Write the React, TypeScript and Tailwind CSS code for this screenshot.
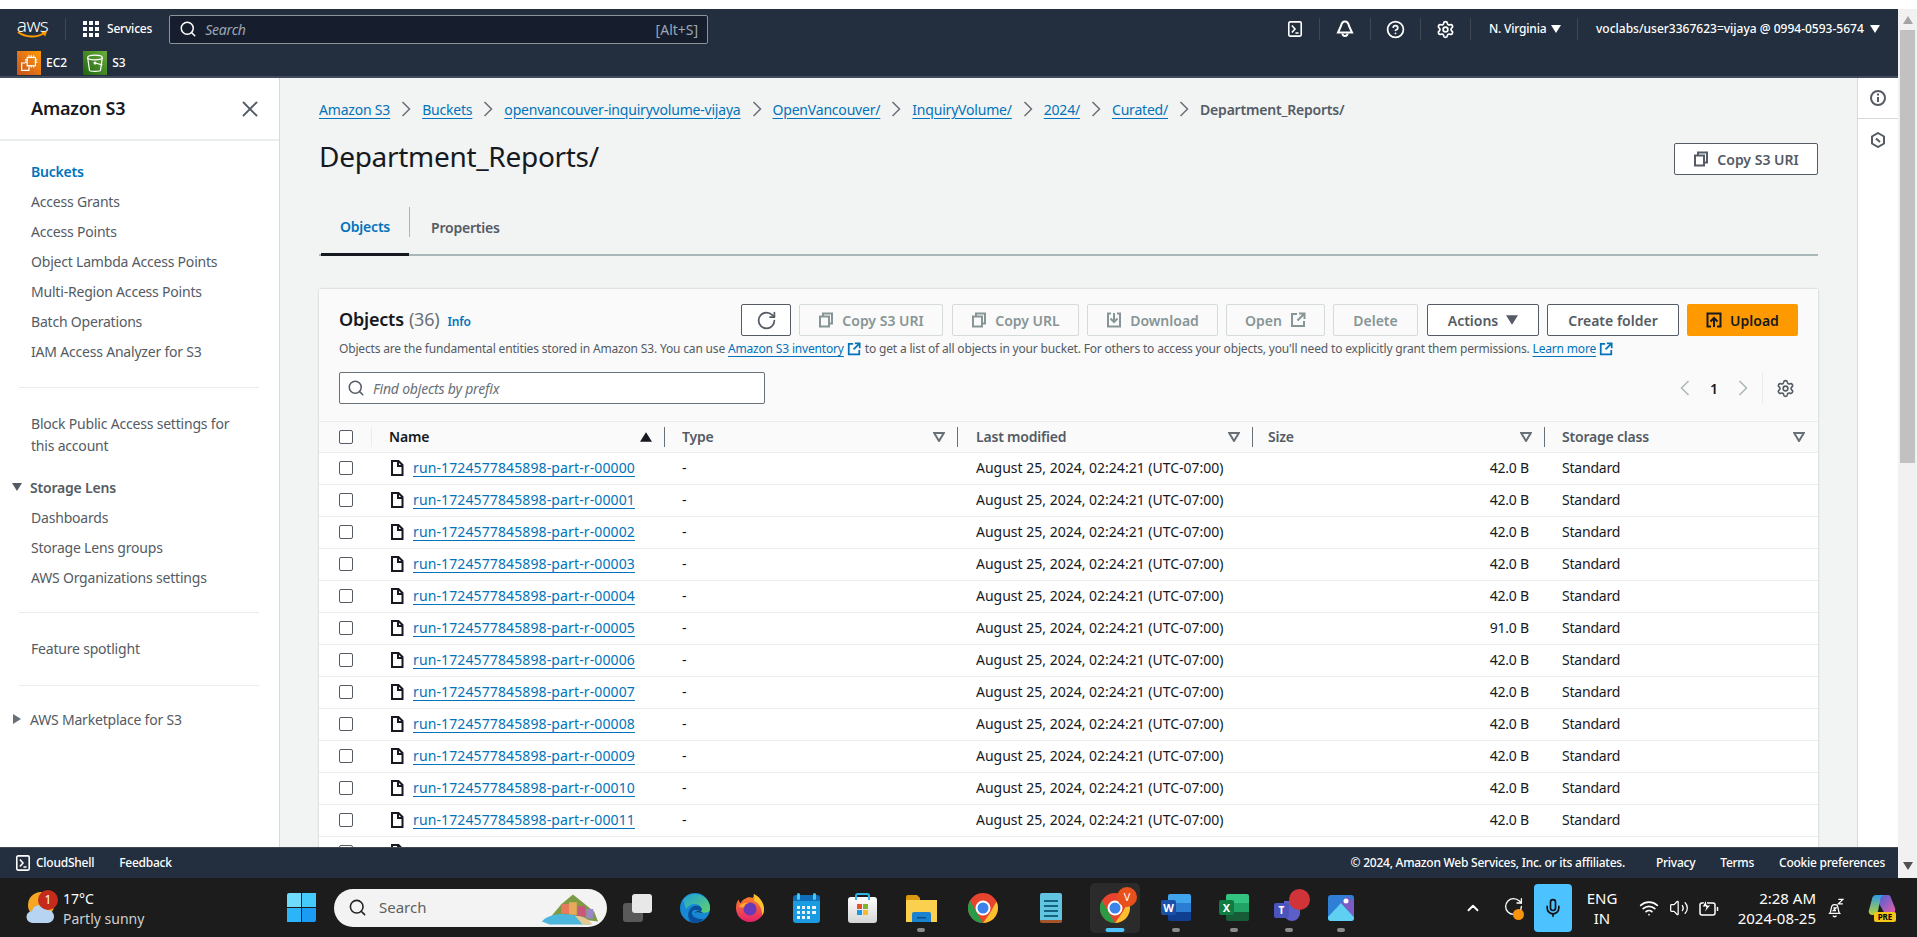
import React from 'react';
import { Search, X, RotateCw, Settings, CircleHelp, ChevronUp, Wifi, Volume2, Mic } from 'lucide-react';

const sans = 'font-["Noto_Sans",sans-serif]';

function Caret({ className = '' }: { className?: string }) {
  return (
    <svg viewBox="0 0 10 8" className={`w-[10px] h-[8px] ${className}`}>
      <path d="M0 0h10L5 8z" fill="currentColor" />
    </svg>
  );
}

function FilterCaret() {
  return (
    <svg viewBox="0 0 12 10" className="w-[12px] h-[10px] text-[#687078]">
      <path d="M1.2 1h9.6L6 9z" fill="none" stroke="currentColor" strokeWidth="2" />
    </svg>
  );
}

function Chevron({ left, className = '' }: { left?: boolean; className?: string }) {
  return (
    <svg viewBox="0 0 10 16" className={`w-[10px] h-[16px] shrink-0 ${className}`} fill="none" stroke="currentColor" strokeWidth="1.500">
      <path d={left ? 'M8.500 1L1.500 8l7 7' : 'M1.500 1l7 7-7 7'} />
    </svg>
  );
}

function CopyIcon() {
  return (
    <svg viewBox="0 0 16 16" className="w-[16px] h-[16px]" fill="none" stroke="currentColor" strokeWidth="2">
      <path d="M5 4V1.500h9v10h-3" />
      <path d="M2 4.500h9v10H2z" />
    </svg>
  );
}

function DownloadIcon() {
  return (
    <svg viewBox="0 0 16 16" className="w-[16px] h-[16px]" fill="none" stroke="currentColor" strokeWidth="2">
      <path d="M5 1.500H2v13h12v-13h-3" />
      <path d="M8 1v8M4.500 6.500L8 10l3.500-3.500" />
    </svg>
  );
}

function ExternalIcon({ className = '' }: { className?: string }) {
  return (
    <svg viewBox="0 0 16 16" className={`w-[14px] h-[14px] ${className}`} fill="none" stroke="currentColor" strokeWidth="2">
      <path d="M7 2H2v12h12V9" />
      <path d="M9 1.500h5.500V7M14 2L7.500 8.500" />
    </svg>
  );
}

function UploadIcon() {
  return (
    <svg viewBox="0 0 16 16" className="w-[16px] h-[16px] text-[#16191f]" fill="none" stroke="currentColor" strokeWidth="2">
      <path d="M5 14.500H1.500v-13h13v13H11" />
      <path d="M8 15V6.500M4.500 9.500L8 6l3.500 3.500" />
    </svg>
  );
}

function FileIcon() {
  return (
    <svg viewBox="0 0 14 16" className="w-[14px] h-[16px] shrink-0 text-[#16191f]" fill="none" stroke="currentColor" strokeWidth="2">
      <path d="M2 1h6.500L12.500 5v10H2z" />
      <path d="M8 1v5h5" />
    </svg>
  );
}

function TerminalBox({ size = 'w-[16px] h-[16px]' }: { size?: string }) {
  return (
    <svg viewBox="0 0 16 18" className={size} fill="none" stroke="white" strokeWidth="1.800">
      <rect x="1" y="1" width="14" height="16" rx="1.500" />
      <path d="M4.500 5l3.500 4-3.500 4M8.500 13.500H12" />
    </svg>
  );
}

function NavBell() {
  return (
    <svg viewBox="0 0 18 18" className="w-[18px] h-[18px]" fill="none" stroke="white" strokeWidth="2">
      <path d="M9 1.500c2.500 0 3.500 2 4 4.500l3 6.500H2L5 6c.5-2.500 1.500-4.500 4-4.500z" />
      <path d="M6.500 13.500a2.500 2.500 0 0 0 5 0" />
    </svg>
  );
}

function AppsGrid() {
  return (
    <div className="grid grid-cols-3 gap-[2.500px] w-[16px] h-[16px]">
      {Array.from({ length: 9 }).map((_, i) => (
        <span key={i} className="bg-white w-[3.500px] h-[3.500px]" />
      ))}
    </div>
  );
}

function Ec2Icon() {
  return (
    <div className="w-[24px] h-[24px] bg-gradient-to-tr from-[#c8511b] to-[#ff9900] flex items-center justify-center">
      <svg viewBox="0 0 24 24" className="w-[22px] h-[22px]" fill="none" stroke="white" strokeWidth="1.300">
        <rect x="10" y="6" width="9" height="9" />
        <path d="M12 3.500V6M14.500 3.500V6M17 3.500V6M12 15v2M14.500 15v2M17 15v2M7.500 8.500H10M7.500 11H10M19 8.500h2M19 11h2" />
        <path d="M8 12H4v8h8v-3" />
      </svg>
    </div>
  );
}

function S3Icon() {
  return (
    <div className="w-[24px] h-[24px] bg-gradient-to-tr from-[#1b660f] to-[#6cae3e] flex items-center justify-center">
      <svg viewBox="0 0 24 24" className="w-[22px] h-[22px]" fill="none" stroke="white" strokeWidth="1.300">
        <ellipse cx="12" cy="6" rx="8" ry="2.500" />
        <path d="M4 6l2 14c0 1.500 12 1.500 12 0l2-14" />
        <circle cx="12" cy="12" r="1" />
        <path d="M12 12l8 2" />
      </svg>
    </div>
  );
}

function NavSep({ className = '' }: { className?: string }) {
  return <span className={`w-px h-[22px] bg-[#414750] ${className}`} />;
}

function TopNav() {
  return (
    <header className="h-[69px] shrink-0 bg-[#232f3e] border-b-2 border-b-[#414d5c] text-white">
      <div className="h-[40px] flex items-center">
        <div className="ml-[17px] w-[31px] flex flex-col items-center">
          <span className={`${sans} text-[19px] font-light leading-[14px] -mt-[2px] tracking-[-0.6px]`}>aws</span>
          <svg viewBox="0 0 32 8" className="w-[31px] h-[8px] -mt-[1px]">
            <path d="M1 1c8 6 20 6 27 1" fill="none" stroke="#ff9900" strokeWidth="2" />
            <path d="M25 1l6-.500-2 5z" fill="#ff9900" />
          </svg>
        </div>
        <NavSep className="ml-[17px]" />
        <div className="ml-[17px]">
          <AppsGrid />
        </div>
        <span className={`${sans} ml-[8px] text-[12px] font-medium tracking-[-0.2px]`}>Services</span>
        <div className="ml-[17px] w-[539px] h-[29px] bg-[#161e2d] border border-[#879596] rounded-[2px] flex items-center pl-[9px] pr-[9px]">
          <Search className="w-[18px] h-[18px] text-white" strokeWidth={2} />
          <span className={`${sans} ml-[8px] text-[14px] italic text-[#9ba7b6] tracking-[-0.2px]`}>Search</span>
          <span className={`${sans} ml-auto text-[14px] text-[#9ba7b6]`}>[Alt+S]</span>
        </div>
        <div className="ml-auto flex items-center">
          <div className="w-[48px] flex justify-center"><TerminalBox /></div>
          <NavSep />
          <div className="w-[50px] flex justify-center"><NavBell /></div>
          <NavSep />
          <div className="w-[49px] flex justify-center"><CircleHelp className="w-[19px] h-[19px]" strokeWidth={2.200} /></div>
          <NavSep />
          <div className="w-[49px] flex justify-center"><Settings className="w-[19px] h-[19px]" strokeWidth={2.200} /></div>
          <NavSep />
          <div className={`${sans} w-[106px] pl-[18px] flex items-center gap-[5px] text-[12px] font-medium tracking-[-0.2px]`}>
            N. Virginia <Caret />
          </div>
          <NavSep />
          <div className={`${sans} w-[320px] pl-[18px] flex items-center gap-[6px] text-[12px] font-medium whitespace-nowrap`}>
            voclabs/user3367623=vijaya @ 0994-0593-5674 <Caret />
          </div>
        </div>
      </div>
      <div className="h-[24px] mt-[2px] flex items-center pl-[17px]">
        <Ec2Icon />
        <span className={`${sans} ml-[5px] text-[12px] font-medium`}>EC2</span>
        <div className="ml-[16px]"><S3Icon /></div>
        <span className={`${sans} ml-[5px] text-[12px] font-medium`}>S3</span>
      </div>
    </header>
  );
}

const navItems = ['Access Grants', 'Access Points', 'Object Lambda Access Points', 'Multi-Region Access Points', 'Batch Operations', 'IAM Access Analyzer for S3'];

function SideLink({ children }: { children: React.ReactNode }) {
  return <div className="h-[30px] leading-[30px] pl-[31px] whitespace-nowrap">{children}</div>;
}

function SideRule() {
  return <div className="h-px bg-[#eaeded] mx-[19px] w-[240px]" />;
}

function Sidebar() {
  return (
    <aside className={`${sans} w-[280px] shrink-0 bg-white border-r border-r-[#d5dbdb] text-[14px] text-[#545b64] tracking-[-0.2px]`}>
      <div className="h-[63px] border-b-2 border-b-[#eaeded] flex items-center justify-between pl-[31px] pr-[16px]">
        <span className="text-[18px] font-semibold text-[#16191f]">Amazon S3</span>
        <X className="w-[26px] h-[26px] text-[#545b64]" strokeWidth={1.700} />
      </div>
      <div className="pt-[16px]">
        <SideLink><span className="font-semibold text-[#0073bb]">Buckets</span></SideLink>
        {navItems.map((t) => (
          <SideLink key={t}>{t}</SideLink>
        ))}
      </div>
      <div className="mt-[20px]"><SideRule /></div>
      <div className="pt-[25px] pl-[31px] leading-[22px]">
        Block Public Access settings for<br />this account
      </div>
      <div className="mt-[14px] h-[32px] flex items-center pl-[12px] font-semibold gap-[8px]">
        <Caret className="text-[#545b64]" />
        Storage Lens
      </div>
      <SideLink>Dashboards</SideLink>
      <SideLink>Storage Lens groups</SideLink>
      <SideLink>AWS Organizations settings</SideLink>
      <div className="mt-[19px]"><SideRule /></div>
      <div className="h-[72px] leading-[72px] pl-[31px]">Feature spotlight</div>
      <SideRule />
      <div className="mt-[18px] h-[30px] flex items-center pl-[13px] gap-[9px]">
        <svg viewBox="0 0 8 10" className="w-[8px] h-[10px] text-[#687078]"><path d="M0 0l8 5-8 5z" fill="currentColor" /></svg>
        AWS Marketplace for S3
      </div>
    </aside>
  );
}

const crumbs = ['Amazon S3', 'Buckets', 'openvancouver-inquiryvolume-vijaya', 'OpenVancouver/', 'InquiryVolume/', '2024/', 'Curated/'];

function Breadcrumbs() {
  return (
    <div className="h-[20px] flex items-center text-[14px]">
      {crumbs.map((c) => (
        <React.Fragment key={c}>
          <span className="text-[#0073bb] underline underline-offset-[3px] whitespace-nowrap">{c}</span>
          <Chevron className="mx-[11px] text-[#687078]" />
        </React.Fragment>
      ))}
      <span className="font-semibold text-[#545b64]">Department_Reports/</span>
    </div>
  );
}

function Btn({ children, disabled, className = '' }: { children: React.ReactNode; disabled?: boolean; className?: string }) {
  return (
    <div
      className={`h-[32px] flex items-center justify-center gap-[8px] rounded-[2px] border text-[14px] font-semibold tracking-normal whitespace-nowrap ${
        disabled ? 'border-[#d5dbdb] bg-[#fafafa] text-[#879596]' : 'border-[#545b64] bg-white text-[#545b64]'
      } ${className}`}
    >
      {children}
    </div>
  );
}

function Toolbar() {
  return (
    <div className="flex items-center">
      <Btn className="w-[50px]"><RotateCw className="w-[21px] h-[21px]" strokeWidth={2} /></Btn>
      <Btn disabled className="w-[144px] ml-[8px]"><CopyIcon />Copy S3 URI</Btn>
      <Btn disabled className="w-[127px] ml-[9px]"><CopyIcon />Copy URL</Btn>
      <Btn disabled className="w-[131px] ml-[8px]"><DownloadIcon />Download</Btn>
      <Btn disabled className="w-[99px] ml-[8px]">Open<ExternalIcon className="w-[16px] h-[16px]" /></Btn>
      <Btn disabled className="w-[85px] ml-[8px]">Delete</Btn>
      <Btn className="w-[112px] ml-[9px]">Actions<Caret className="w-[12px] h-[10px]" /></Btn>
      <Btn className="w-[132px] ml-[8px]">Create folder</Btn>
      <div className="w-[111px] h-[32px] ml-[8px] bg-[#ff9900] rounded-[2px] flex items-center justify-center gap-[8px] text-[14px] font-semibold tracking-normal text-[#16191f]">
        <UploadIcon />Upload
      </div>
    </div>
  );
}

const rows = Array.from({ length: 12 }).map((_, i) => ({
  name: `run-1724577845898-part-r-${String(i).padStart(5, '0')}`,
  size: i === 5 ? '91.0 B' : '42.0 B',
}));

const gridCols = 'grid grid-cols-[53px_293px_293px_295px_292px_272px]';

function Check() {
  return <span className="block w-[14px] h-[14px] bg-white border border-[#545b64] rounded-[2px]" />;
}

function HeadCell({ label, sort, last, pl }: { label: string; sort?: boolean; last?: boolean; pl: string }) {
  return (
    <div className={`h-[20px] flex items-center justify-between pr-[12px] font-semibold text-[14px] text-[#545b64] ${pl} ${last ? '' : 'border-r border-r-[#687078]'}`}>
      <span className={`pb-[2px] ${sort ? 'text-[#16191f]' : ''}`}>{label}</span>
      {sort ? <Caret className="w-[12px] h-[10px] rotate-180 text-[#16191f]" /> : <FilterCaret />}
    </div>
  );
}

function ObjectsCard() {
  return (
    <section className="bg-white mt-[33px] shadow-[0_0_2px_rgba(0,28,36,0.3)] rounded-t-[2px]">
      <div className="bg-[#fafafa] h-[132px] pt-[15px] pl-[20px] pr-[20px]">
        <div className="flex items-center justify-between">
          <div className="flex items-baseline -mt-[2px]">
            <span className="text-[18px] font-semibold text-[#16191f]">Objects</span>
            <span className="text-[18px] text-[#687078] ml-[5px]">(36)</span>
            <span className="text-[12px] font-semibold text-[#0073bb] ml-[8px]">Info</span>
          </div>
          <Toolbar />
        </div>
        <p className="mt-[4px] h-[18px] leading-[18px] text-[12px] text-[#545b64] tracking-[-0.17px] whitespace-nowrap flex items-center">
          Objects are the fundamental entities stored in Amazon S3. You can use&nbsp;
          <span className="text-[#0073bb] underline underline-offset-[3px]">Amazon S3 inventory</span>
          <ExternalIcon className="ml-[3px] mr-[4px] text-[#0073bb]" />
          to get a list of all objects in your bucket. For others to access your objects, you'll need to explicitly grant them permissions.&nbsp;
          <span className="text-[#0073bb] underline underline-offset-[3px]">Learn more</span>
          <ExternalIcon className="ml-[3px] text-[#0073bb]" />
        </p>
        <div className="mt-[14px] flex items-center justify-between">
          <div className="w-[426px] h-[32px] bg-white border border-[#687078] rounded-[2px] flex items-center pl-[7px]">
            <Search className="w-[18px] h-[18px] text-[#545b64]" strokeWidth={2} />
            <span className="ml-[8px] text-[14px] italic text-[#687078]">Find objects by prefix</span>
          </div>
          <div className="flex items-center text-[#aab7b8] pr-[3px]">
            <Chevron left className="w-[8px] h-[14px]" />
            <span className="w-[48px] text-center text-[14px] font-semibold text-[#16191f]">1</span>
            <Chevron className="w-[8px] h-[14px]" />
            <span className="ml-[14px] w-px h-[32px] bg-[#eaeded]" />
            <Settings className="ml-[13px] w-[19px] h-[19px] text-[#545b64]" strokeWidth={2} />
          </div>
        </div>
      </div>
      <div className={`${gridCols} h-[32px] items-center bg-[#fafafa] border-y border-y-[#eaeded]`}>
        <div className="pl-[20px] h-[20px] flex items-center border-r border-r-[#eaeded]"><Check /></div>
        <HeadCell label="Name" sort pl="pl-[17px]" />
        <HeadCell label="Type" pl="pl-[17px]" />
        <HeadCell label="Last modified" pl="pl-[18px]" />
        <HeadCell label="Size" pl="pl-[15px]" />
        <HeadCell label="Storage class" last pl="pl-[17px]" />
      </div>
      {rows.map((r) => (
        <div key={r.name} className={`${gridCols} h-[32px] pb-[2px] items-center border-b border-b-[#eaeded] text-[14px] text-[#16191f]`}>
          <div className="pl-[20px]"><Check /></div>
          <div className="pl-[18px] flex items-center gap-[9px]">
            <FileIcon />
            <span className="text-[#0073bb] underline underline-offset-[3px] tracking-[0.12px] whitespace-nowrap">{r.name}</span>
          </div>
          <div className="pl-[17px]">-</div>
          <div className="pl-[18px] tracking-normal whitespace-nowrap">August 25, 2024, 02:24:21 (UTC-07:00)</div>
          <div className="pr-[16px] text-right">{r.size}</div>
          <div className="pl-[17px]">Standard</div>
        </div>
      ))}
      {/* next row, only its top edge shows above the console footer */}
      <div className={`${gridCols} h-[32px] pb-[2px] items-center`}>
        <div className="pl-[20px]"><Check /></div>
        <div className="pl-[18px]"><FileIcon /></div>
      </div>
    </section>
  );
}

function Content() {
  return (
    <main className={`${sans} flex-1 min-w-0 bg-[#f2f3f3] px-[39px] pt-[21px] overflow-hidden tracking-[-0.2px]`}>
      <Breadcrumbs />
      <div className="mt-[18px] flex items-start justify-between">
        <h1 className="text-[28px] leading-[40px] text-[#16191f] tracking-[-0.3px] -mt-[1px]">Department_Reports/</h1>
        <Btn className="w-[144px] mt-[6px]"><CopyIcon />Copy S3 URI</Btn>
      </div>
      <div className="mt-[31px] h-[49px] border-b-2 border-b-[#aab7b8] flex items-start text-[14px] font-semibold">
        <div className="w-[88px] h-[49px] ml-[2px] pb-[7px] border-b-[3px] border-b-[#16191f] flex items-center justify-center text-[#0073bb]">Objects</div>
        <span className="w-px h-[30px] bg-[#aab7b8]" />
        <div className="h-[40px] pl-[21px] flex items-center text-[#545b64]">Properties</div>
      </div>
      <ObjectsCard />
    </main>
  );
}

function RightRail() {
  return (
    <div className="w-[41px] shrink-0 bg-white border-l border-l-[#d5dbdb] text-[#545b64]">
      <div className="h-[41px] flex items-center justify-center border-b border-b-[#d5dbdb]">
        <svg viewBox="0 0 16 16" className="w-[16px] h-[16px]" fill="none" stroke="currentColor" strokeWidth="2">
          <circle cx="8" cy="8" r="7" />
          <path d="M8 7v5M8 3.500v2" />
        </svg>
      </div>
      <div className="h-[41px] flex items-center justify-center">
        <svg viewBox="0 0 16 16" className="w-[16px] h-[16px]" fill="none" stroke="currentColor" strokeWidth="2">
          <path d="M8 1l6 3.500v7L8 15l-6-3.500v-7z" />
          <path d="M6 6.500l4 3.500" />
        </svg>
      </div>
    </div>
  );
}

function ConsoleFooter() {
  return (
    <footer className={`${sans} h-[31px] shrink-0 bg-[#232f3e] border-t border-t-[#414750] flex items-center text-[12px] font-medium text-white tracking-[-0.25px]`}>
      <div className="ml-[15px]"><TerminalBox /></div>
      <span className="ml-[5px]">CloudShell</span>
      <span className="ml-[25px]">Feedback</span>
      <span className="ml-auto">© 2024, Amazon Web Services, Inc. or its affiliates.</span>
      <span className="ml-[31px]">Privacy</span>
      <span className="ml-[25px]">Terms</span>
      <span className="ml-[25px] mr-[13px]">Cookie preferences</span>
    </footer>
  );
}

function Scrollbar() {
  return (
    <div className="w-[19px] shrink-0 bg-[#f1f1f1] flex flex-col items-center">
      <div className="h-[21px] flex items-center justify-center text-[#a3a3a3]">
        <Caret className="rotate-180" />
      </div>
      <div className="w-[15px] h-[433px] bg-[#c1c1c1]" />
      <div className="mt-auto h-[24px] flex items-center justify-center text-[#505050]">
        <Caret />
      </div>
    </div>
  );
}

/* taskbar drawings */

function WeatherIcon() {
  return (
    <svg viewBox="0 0 28 34" className="w-[28px] h-[34px]">
      <circle cx="15" cy="14" r="13" fill="#f5a623" />
      <path d="M7 32a6 6 0 0 1-1-12 8 8 0 0 1 15-1 6 6 0 0 1 1 13z" fill="#b7d4f3" />
    </svg>
  );
}

function WindowsLogo() {
  return (
    <div className="grid grid-cols-2 gap-[1.500px] w-[29px] h-[29px]">
      <span className="bg-[#6fdcfb] rounded-tl-[2px]" />
      <span className="bg-[#45cbfa]" />
      <span className="bg-[#2bb4f8]" />
      <span className="bg-[#1a9cf6] rounded-br-[2px]" />
    </div>
  );
}

function BeachArt() {
  return (
    <svg viewBox="0 0 60 36" className="w-[58px] h-[36px]">
      <path d="M10 26l10-12 12-10 10 8 12 10 4 10z" fill="#7d9a45" />
      <rect x="20" y="14" width="8" height="10" fill="#e77b5c" />
      <rect x="28" y="12" width="8" height="13" fill="#e7a95c" />
      <rect x="37" y="16" width="8" height="11" fill="#c7577b" />
      <rect x="46" y="19" width="7" height="10" fill="#9a86c9" />
      <path d="M0 32c6-8 24-10 38-5l12 8H8z" fill="#4cb6dd" />
      <path d="M34 26c8 0 14 3 18 9H42z" fill="#e2c993" />
    </svg>
  );
}

function TaskView() {
  return (
    <div className="relative w-[29px] h-[28px]">
      <span className="absolute left-0 top-[9px] w-[20px] h-[19px] rounded-[3px] bg-[#5a5a5a]" />
      <span className="absolute left-[9px] top-0 w-[20px] h-[19px] rounded-[3px] bg-[#e8e8e8]" />
    </div>
  );
}

function EdgeIcon() {
  return (
    <svg viewBox="0 0 30 30" className="w-[30px] h-[30px]">
      <defs>
        <linearGradient id="edgeTop" x1="0" y1="0" x2="1" y2="1">
          <stop offset="0" stopColor="#1f9fdc" />
          <stop offset="1" stopColor="#5fd36a" />
        </linearGradient>
      </defs>
      <circle cx="15" cy="15" r="15" fill="#1688d6" />
      <path d="M3 7C8-1 24-2 29 10c2 5 1 8-1 9-2 1-5 1-7 0 1-4-1-8-6-8-4 0-7 2-9 5-1-3-2-6-3-9z" fill="url(#edgeTop)" />
      <path d="M21 19c-3-3-8-3-9 0-1 3 3 7 9 7 2 0 3 0 4-1-3 3-6 5-10 5-3 0-5-1-6-4-2-5 0-11 5-13 4-1 7 0 8 3z" fill="#0b4f9c" />
      <path d="M21 19c-2-1-5-1-6 1 3-2 5 0 8 0z" fill="#1c1c1c" />
    </svg>
  );
}

function FirefoxIcon() {
  return (
    <svg viewBox="0 0 30 30" className="w-[28px] h-[30px]">
      <defs>
        <linearGradient id="foxBody" x1="0" y1="0" x2="0" y2="1">
          <stop offset="0" stopColor="#ff8a1f" />
          <stop offset="1" stopColor="#e3206f" />
        </linearGradient>
      </defs>
      <path d="M15 30C6 30 0 23 0 15c0-4 1-7 3-9 0 2 1 3 2 4 1-3 4-5 7-6 2-1 4 0 6 0 1-1 1-2 1-4 6 3 11 9 11 17 0 7-7 13-15 13z" fill="url(#foxBody)" />
      <path d="M19 0c6 3 11 9 11 17 0 2-1 5-2 6 0-7-3-13-9-16 1-2 1-4 0-7z" fill="#fdc32e" />
      <circle cx="15" cy="16" r="7" fill="#6a39b8" />
      <path d="M3 13c4-4 8-4 11-3-3 0-5 2-5 4-2 1-4 0-6-1z" fill="#fca629" />
    </svg>
  );
}

function CalendarIcon() {
  return (
    <div className="relative w-[27px] h-[30px] pt-[2px]">
      <span className="absolute left-[4px] top-0 w-[3px] h-[7px] bg-[#4ac8f5] rounded-full" />
      <span className="absolute right-[4px] top-0 w-[3px] h-[7px] bg-[#4ac8f5] rounded-full" />
      <div className="h-full bg-[#1b9ce2] rounded-[3px] border-t-[6px] border-t-[#0d6fb8] grid grid-cols-4 gap-[2px] p-[4px] pt-[5px]">
        {Array.from({ length: 11 }).map((_, i) => (
          <span key={i} className="bg-white/90" />
        ))}
      </div>
    </div>
  );
}

function StoreIcon() {
  return (
    <div className="relative w-[29px] h-[30px] pt-[4px]">
      <span className="absolute left-[7px] top-0 w-[15px] h-[7px] border-2 border-[#2fb5e8] border-b-0 rounded-t-[3px]" />
      <div className="h-full bg-gradient-to-b from-white to-[#d5d5d5] rounded-[3px] flex items-center justify-center">
        <div className="grid grid-cols-2 gap-[1px] w-[11px] h-[11px]">
          <span className="bg-[#e5532c]" />
          <span className="bg-[#7db52c]" />
          <span className="bg-[#1a9ae0]" />
          <span className="bg-[#fcb92a]" />
        </div>
      </div>
    </div>
  );
}

function FolderIcon() {
  return (
    <svg viewBox="0 0 31 28" className="w-[31px] h-[28px]">
      <path d="M0 3a2 2 0 0 1 2-2h9l3 3v4H0z" fill="#d99a12" />
      <path d="M0 6h31v22H0z" fill="#fbd04e" />
      <rect x="6" y="18" width="19" height="12" rx="2" fill="#1b82cf" />
      <rect x="11" y="23" width="9" height="1.500" fill="#0a4d88" />
    </svg>
  );
}

function ChromeIcon({ size = 'w-[30px] h-[30px]' }: { size?: string }) {
  return (
    <svg viewBox="0 0 30 30" className={size}>
      <circle cx="15" cy="15" r="15" fill="#e8432e" />
      <path d="M15 30A15 15 0 0 1 2 7.500L9 20z" fill="#2b9a46" />
      <path d="M15 30l7-10 6.500-11.500A15 15 0 0 1 15 30z" fill="#fbc02d" />
      <circle cx="15" cy="15" r="7.500" fill="white" />
      <circle cx="15" cy="15" r="5.500" fill="#3b82ea" />
    </svg>
  );
}

function NotepadIcon() {
  return (
    <div className="w-[22px] h-[30px] rounded-[2px] bg-[#61c4e1] border-b-[3px] border-b-[#a8542a] flex flex-col gap-[3px] pt-[7px] px-[4px]">
      <span className="h-[2px] bg-[#14627f]" />
      <span className="h-[2px] bg-[#14627f]" />
      <span className="h-[2px] bg-[#14627f]" />
      <span className="h-[2px] bg-[#14627f]" />
    </div>
  );
}

function OfficeIcon({ letter, dark, colA, colB, colC }: { letter: string; dark: string; colA: string; colB: string; colC: string }) {
  return (
    <div className="relative w-[30px] h-[27px] pl-[7px]">
      <div className="h-full rounded-[2px] overflow-hidden flex flex-col">
        <span className={`flex-1 ${colA}`} />
        <span className={`flex-1 ${colB}`} />
        <span className={`flex-1 ${colC}`} />
      </div>
      <span className={`${sans} absolute left-0 top-[6px] w-[15px] h-[15px] rounded-[2px] ${dark} text-white text-[11px] leading-[15px] font-bold text-center`}>{letter}</span>
    </div>
  );
}

function TeamsIcon() {
  return (
    <div className="relative w-[30px] h-[30px]">
      <span className="absolute left-[10px] top-[8px] w-[16px] h-[20px] rounded-b-full bg-[#5b5fc7]" />
      <span className={`${sans} absolute left-0 top-[10px] w-[15px] h-[15px] bg-[#4b53bc] rounded-[2px] text-white text-[10px] leading-[15px] font-bold text-center`}>T</span>
      <span className="absolute right-[-6px] -top-[4px] w-[21px] h-[21px] rounded-full bg-[#d13438]" />
    </div>
  );
}

function PhotosIcon() {
  return (
    <svg viewBox="0 0 26 26" className="w-[26px] h-[26px]">
      <rect width="26" height="26" rx="3" fill="#2f7fd6" />
      <path d="M0 22L13 8l13 14v1a3 3 0 0 1-3 3H3a3 3 0 0 1-3-3z" fill="#5fd0f2" />
      <path d="M13 8l13 14V6L19 1z" fill="#7a5bc7" />
      <circle cx="18" cy="6" r="2.500" fill="white" />
    </svg>
  );
}

function TaskSlot({ width, children, dot }: { width: string; children: React.ReactNode; dot?: boolean }) {
  return (
    <div className={`relative h-full shrink-0 flex items-center justify-center ${width}`}>
      {children}
      {dot && <span className="absolute bottom-[5px] left-1/2 -translate-x-1/2 w-[8px] h-[4px] rounded-full bg-[#8a8a8a]" />}
    </div>
  );
}

function CopilotIcon() {
  return (
    <div className="relative w-[28px] h-[28px]">
      <svg viewBox="0 0 28 22" className="absolute left-0 top-0 w-[28px] h-[22px]">
        <defs>
          <linearGradient id="copL" x1="0" y1="0" x2="0" y2="1">
            <stop offset="0" stopColor="#2f9be8" />
            <stop offset="1" stopColor="#b5d334" />
          </linearGradient>
          <linearGradient id="copR" x1="0" y1="0" x2="1" y2="1">
            <stop offset="0" stopColor="#3a62d9" />
            <stop offset="1" stopColor="#ef5da8" />
          </linearGradient>
        </defs>
        <path d="M9 1h11c2 0 3 2 3 3l4 10c1 3-1 6-4 6h-6L9 6z" fill="url(#copR)" />
        <path d="M8 1h8c-3 1-4 3-4 6l-2 10c-1 3-2 4-5 4-3 0-5-2-4-5L4 5c0-2 2-4 4-4z" fill="url(#copL)" />
      </svg>
      <span className={`${sans} absolute right-0 bottom-0 h-[10px] w-[22px] bg-[#f5c518] rounded-[2px] text-[8px] leading-[10px] font-bold text-center text-black`}>PRE</span>
    </div>
  );
}

function Taskbar() {
  return (
    <div className={`${sans} h-[59px] shrink-0 bg-[#1c1c1c] flex items-center text-white`}>
      <div className="relative ml-[26px] w-[28px]">
        <WeatherIcon />
        <span className="absolute left-[12px] -top-[1px] w-[20px] h-[20px] rounded-full bg-[#c42b1c] text-[12px] leading-[20px] text-center">1</span>
      </div>
      <div className="ml-[9px] w-[224px] leading-[20px] pt-[2px]">
        <div className="text-[14px]">17°C</div>
        <div className="text-[14px] text-[#cfcfcf]">Partly sunny</div>
      </div>
      <WindowsLogo />
      <div className="ml-[18px] w-[273px] h-[38px] rounded-full bg-[#f3f3f3] flex items-center pl-[14px] pr-[7px] text-[#5f5f5f]">
        <Search className="w-[19px] h-[19px] text-[#222]" strokeWidth={2} />
        <span className="ml-[12px] text-[15px]">Search</span>
        <div className="ml-auto"><BeachArt /></div>
      </div>
      <div className="ml-[16px]"><TaskView /></div>
      <div className="ml-[15px] h-full flex">
        <TaskSlot width="w-[56px]"><EdgeIcon /></TaskSlot>
        <TaskSlot width="w-[54px]"><FirefoxIcon /></TaskSlot>
        <TaskSlot width="w-[58px]"><CalendarIcon /></TaskSlot>
        <TaskSlot width="w-[54px]"><StoreIcon /></TaskSlot>
        <TaskSlot width="w-[64px]" dot><FolderIcon /></TaskSlot>
        <TaskSlot width="w-[60px]"><ChromeIcon /></TaskSlot>
        <TaskSlot width="w-[76px]"><NotepadIcon /></TaskSlot>
        <TaskSlot width="w-[52px]">
          <div className="relative w-[50px] h-[50px] rounded-[5px] bg-[#2b2b2b] flex items-center justify-center">
            <ChromeIcon />
            <span className="absolute right-[3px] top-[4px] w-[20px] h-[20px] rounded-full bg-[#e8501c] text-[11px] leading-[20px] text-center">V</span>
            <span className="absolute bottom-[1px] left-1/2 -translate-x-1/2 w-[19px] h-[4px] rounded-full bg-[#4cc2ff]" />
          </div>
        </TaskSlot>
        <TaskSlot width="w-[70px]" dot>
          <OfficeIcon letter="W" dark="bg-[#1b4fa8]" colA="bg-[#41a5ee]" colB="bg-[#2b7cd3]" colC="bg-[#103f91]" />
        </TaskSlot>
        <TaskSlot width="w-[46px]" dot>
          <OfficeIcon letter="X" dark="bg-[#107c41]" colA="bg-[#33c481]" colB="bg-[#21a366]" colC="bg-[#185c37]" />
        </TaskSlot>
        <TaskSlot width="w-[64px]" dot><TeamsIcon /></TaskSlot>
        <TaskSlot width="w-[40px]" dot><PhotosIcon /></TaskSlot>
      </div>
      <ChevronUp className="ml-[103px] w-[18px] h-[18px] text-white" strokeWidth={2.500} />
      <div className="relative ml-[21px] w-[21px] h-[24px]">
        <RotateCw className="w-[21px] h-[21px] text-white" strokeWidth={1.500} />
        <span className="absolute right-0 bottom-0 w-[11px] h-[11px] rounded-full bg-[#f7930e]" />
      </div>
      <div className="ml-[10px] w-[38px] h-[48px] rounded-[4px] bg-[#4cc2ff] flex items-center justify-center">
        <Mic className="w-[20px] h-[24px] text-[#111]" strokeWidth={2} />
      </div>
      <div className="ml-[13px] w-[34px] text-center text-[15px] leading-[20px]">ENG<br />IN</div>
      <Wifi className="ml-[20px] w-[20px] h-[20px]" strokeWidth={2} />
      <Volume2 className="ml-[10px] w-[20px] h-[20px]" strokeWidth={1.500} />
      <svg viewBox="0 0 20 18" className="ml-[10px] w-[20px] h-[18px]" fill="none" stroke="white" strokeWidth="1.500">
        <rect x="1" y="4" width="15" height="12" rx="2" />
        <path d="M18.500 8v4" />
        <path d="M7 1L3 8h4l-2 6 7-8H8z" fill="white" stroke="#1c1c1c" strokeWidth="1" />
      </svg>
      <div className="ml-auto mr-[12px] text-right text-[15px] leading-[20px]">2:28 AM<br />2024-08-25</div>
      <svg viewBox="0 0 18 22" className="w-[17px] h-[20px] mr-[23px]" fill="none" stroke="white" strokeWidth="1.400">
        <path d="M1.500 17c2-2 1-7 3-9 1-1 4-1 5 0 2 2 1 7 3 9zM5 19.500c1 1.500 3 1.500 4 0" />
        <path d="M11 1.500h5l-5 5h5M5.500 11h3l-3 3h3" />
      </svg>
      <div className="mr-[21px]"><CopilotIcon /></div>
    </div>
  );
}

export default function App() {
  return (
    <div className="w-[1917px] h-[937px] overflow-hidden flex flex-col bg-white">
      <div className="h-[9px] shrink-0 bg-white" />
      <div className="h-[869px] flex">
        <div className="flex-1 min-w-0 flex flex-col">
          <TopNav />
          <div className="flex-1 min-h-0 flex overflow-hidden">
            <Sidebar />
            <Content />
            <RightRail />
          </div>
          <ConsoleFooter />
        </div>
        <Scrollbar />
      </div>
      <Taskbar />
    </div>
  );
}
